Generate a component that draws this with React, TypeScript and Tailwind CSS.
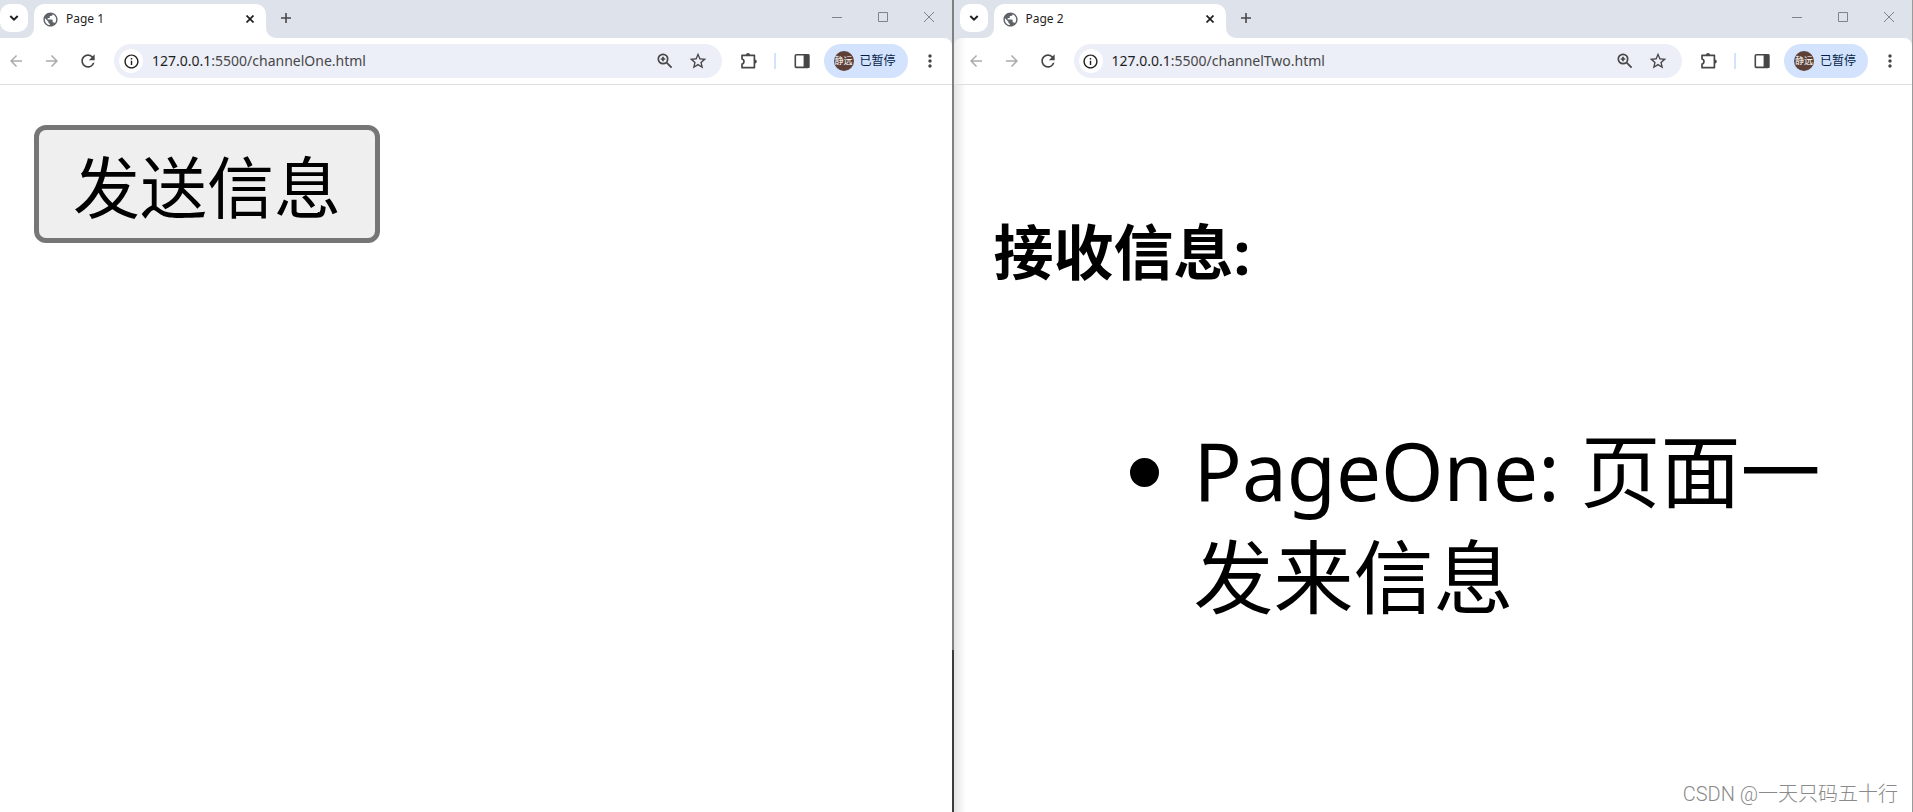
import type { ReactNode } from "react";
import {
	MdArrowBack,
	MdArrowForward,
	MdInfoOutline,
	MdMoreVert,
	MdPublic,
	MdRefresh,
	MdStarOutline,
} from "react-icons/md";
import clsx from "clsx";

type BrowserWindowProps = {
	title: string;
	host: string;
	path: string;
	front?: boolean;
	children: ReactNode;
};

function TabStrip({ title, front }: { title: string; front?: boolean }) {
	return (
		<div className={clsx("flex h-[38px] items-start bg-[#dee2ea] pt-1", front && "pl-1.5")}>
			<button
				type="button"
				aria-label="Search tabs"
				className="relative z-10 flex size-7 items-center justify-center rounded-[10px] bg-white text-[#1f1f1f]"
			>
				<svg viewBox="0 0 10 6" className="h-1.5 w-2.5" fill="none" stroke="currentColor" strokeWidth="2">
					<path d="M1.3 1 5 4.6 8.7 1" />
				</svg>
			</button>
			<div className="relative ml-1.5 flex h-[34px] w-[232px] items-center rounded-t-[10px] bg-white pr-2 pb-1 pl-2">
				<span className="absolute bottom-0 -left-2.5 size-2.5 bg-white">
					<span className="block size-full rounded-br-[10px] bg-[#dee2ea]" />
				</span>
				<span className="absolute -right-2.5 bottom-0 size-2.5 bg-white">
					<span className="block size-full rounded-bl-[10px] bg-[#dee2ea]" />
				</span>
				<MdPublic className="size-[17px] text-[#5f6368]" />
				<span className="ml-[7px] flex-1 text-xs text-[#1f1f1f]">{title}</span>
				<button type="button" aria-label="Close tab" className="flex size-4 items-center justify-center text-[#1f1f1f]">
					<svg viewBox="0 0 8 8" className="size-2" stroke="currentColor" strokeWidth="1.7">
						<path d="M.5.5l7 7M7.5.5l-7 7" />
					</svg>
				</button>
			</div>
			<button type="button" aria-label="New tab" className="ml-1.5 flex size-7 items-center justify-center text-[#474747]">
				<svg viewBox="0 0 10 10" className="size-2.5" stroke="currentColor" strokeWidth="1.6">
					<path d="M5 0v10M0 5h10" />
				</svg>
			</button>
			<div className="ml-auto flex text-[#80848a]">
				<button type="button" aria-label="Minimize" className="flex h-[26px] w-[46px] items-center justify-center">
					<svg viewBox="0 0 10 10" className="size-2.5" stroke="currentColor" strokeWidth="1">
						<path d="M0 5.5h10" />
					</svg>
				</button>
				<button type="button" aria-label="Maximize" className="flex h-[26px] w-[46px] items-center justify-center">
					<svg viewBox="0 0 10 10" className="size-2.5" fill="none" stroke="currentColor" strokeWidth="1">
						<path d="M.5.5h9v9h-9z" />
					</svg>
				</button>
				<button type="button" aria-label="Close" className="flex h-[26px] w-[46px] items-center justify-center">
					<svg viewBox="0 0 10 10" className="size-2.5" stroke="currentColor" strokeWidth="1">
						<path d="M0 0l10 10M10 0L0 10" />
					</svg>
				</button>
			</div>
		</div>
	);
}

function Toolbar({ host, path, front }: { host: string; path: string; front?: boolean }) {
	return (
		<div className="bg-[#dee2ea]">
			<div
				className={clsx(
					"flex h-[47px] items-center rounded-tr-lg border-b border-[#dfdfdf] text-[#474747]",
					front ? "rounded-tl-lg bg-linear-to-r from-[#ececec] to-white to-[12px] pl-1.5" : "bg-white",
				)}
			>
				<div className="flex w-[114px] shrink-0 items-center gap-4 pl-1.5">
					<button type="button" aria-label="Back" className="flex size-5 items-center justify-center text-[#ababab]">
						<MdArrowBack className="size-[18px]" />
					</button>
					<button type="button" aria-label="Forward" className="flex size-5 items-center justify-center text-[#ababab]">
						<MdArrowForward className="size-[18px]" />
					</button>
					<button type="button" aria-label="Reload" className="flex size-5 items-center justify-center">
						<MdRefresh className="size-5" />
					</button>
				</div>
				<div className="flex h-[34px] min-w-0 flex-1 items-center rounded-full bg-[#eceef8] pr-3.5 pl-[5px]">
					<button
						type="button"
						aria-label="View site information"
						className="flex size-6 shrink-0 items-center justify-center rounded-full bg-white text-[#1f1f1f]"
					>
						<MdInfoOutline className="size-[17px]" />
					</button>
					<a href="#" className="ml-[9px] flex-1 truncate text-sm text-[#474747]">
						<span className="text-[#1f1f1f]">{host}</span>
						{path}
					</a>
					<button type="button" aria-label="Zoom">
						<svg viewBox="0 0 18 18" className="size-[18px]" fill="none" stroke="currentColor" strokeWidth="1.7">
							<circle cx="7" cy="7" r="4.7" />
							<path d="M10.4 10.4l5.2 5.2M7 4.8v4.4M4.8 7h4.4" />
						</svg>
					</button>
					<button type="button" aria-label="Bookmark this tab" className="ml-3.5">
						<MdStarOutline className="size-5" />
					</button>
				</div>
				<div className="flex w-[230px] shrink-0 items-center pl-4">
					<button type="button" aria-label="Extensions">
						<svg viewBox="0 0 20 20" className="size-5" fill="none" stroke="currentColor" strokeWidth="1.7" strokeLinejoin="round">
							<path d="M4 4.3h12.4v12.4H4v-3.6c2.6-.5 2.6-4.6 0-5.1z" />
							<path d="M8 3.9a2 2 0 0 1 4 0zM16.8 8.5a2 2 0 0 1 0 4z" fill="currentColor" stroke="none" />
						</svg>
					</button>
					<span className="ml-4 h-4 w-0.5 bg-[#d3e3fd]" />
					<button type="button" aria-label="Side panel" className="ml-[18px]">
						<svg viewBox="0 0 16 16" className="size-4" fill="none" stroke="currentColor" strokeWidth="1.6">
							<rect x="1.3" y="1.8" width="13.4" height="12.6" rx="1" />
							<path d="M10.4 2h4.2v12.2h-4.2z" fill="currentColor" />
						</svg>
					</button>
					<button
						type="button"
						className="ml-3.5 flex h-[34px] w-[84px] items-center rounded-full bg-[#d3e3fd] pl-2.5 text-xs text-[#041e49]"
					>
						<span className="mr-1.5 flex size-5 items-center justify-center rounded-full bg-[#5d4037] text-[9px] text-white">
							静远
						</span>
						已暂停
					</button>
					<button type="button" aria-label="Menu" className="ml-3">
						<MdMoreVert className="size-5" />
					</button>
				</div>
			</div>
		</div>
	);
}

function BrowserWindow({ title, host, path, front, children }: BrowserWindowProps) {
	return (
		<section className="flex min-w-0 flex-1 flex-col bg-white">
			<TabStrip title={title} front={front} />
			<Toolbar host={host} path={path} front={front} />
			<main className={clsx("flex-1", front && "bg-linear-to-r from-[#e4e4e4] to-white to-[12px]")}>
				{children}
			</main>
		</section>
	);
}

export default function App() {
	return (
		<div className="relative flex min-h-screen bg-white font-['Noto_Sans','Noto_Sans_CJK_SC',sans-serif] text-black">
			<div className="flex min-w-0 flex-[952]">
				<BrowserWindow title="Page 1" host="127.0.0.1" path=":5500/channelOne.html">
					<div className="px-[34px] py-10">
						<button
							type="button"
							className="h-[118px] rounded-[12px] border-5 border-[#767676] bg-[#efefef] px-[34px] pt-1.5 text-[67px] leading-none"
						>
							发送信息
						</button>
					</div>
				</BrowserWindow>
			</div>
			<div className="flex w-0.5 flex-col">
				<div className="flex-4 bg-[#808080]" />
				<div className="flex-1 bg-[#3b3b40]" />
			</div>
			<div className="flex min-w-0 flex-[959] border-r border-[#9a9a9a]">
				<BrowserWindow title="Page 2" host="127.0.0.1" path=":5500/channelTwo.html" front>
					<div className="px-10">
						<h3 className="pt-[127px] text-[60px] leading-[80px] font-bold">接收信息:</h3>
						<ul className="mt-[125px] list-disc pl-[200px] text-[80px] leading-[106px]">
							<li>PageOne: 页面一发来信息</li>
						</ul>
					</div>
				</BrowserWindow>
			</div>
			<p className="absolute right-[15px] bottom-1.5 font-['Roboto','Noto_Sans_CJK_SC',sans-serif] text-xl leading-6 font-light text-[#8a8a8a]">
				CSDN @一天只码五十行
			</p>
		</div>
	);
}
